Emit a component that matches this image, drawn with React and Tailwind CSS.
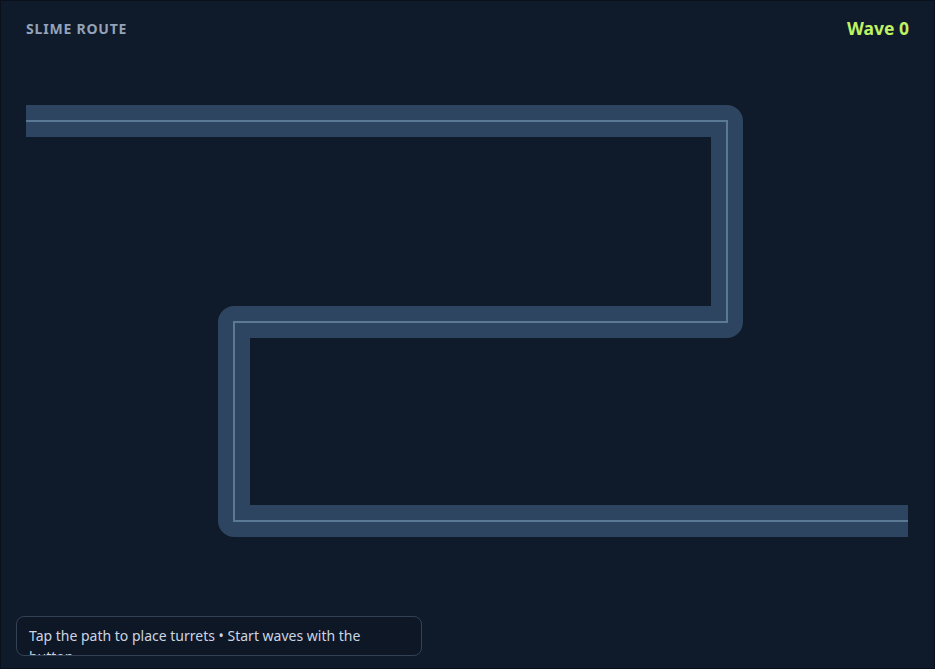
export default function App() {
  const route = "M26 121 H727 V322 H234 V521 H908";

  return (
    <div
      className="relative h-[669px] w-full overflow-hidden border border-[#0a111c] bg-[#0f1a2a]"
      style={{ fontFamily: '"Noto Sans", "Open Sans", sans-serif' }}
    >
      {/* Top bar */}
      <div className="flex h-[56px] items-center justify-between px-[25px] pb-[1px]">
        <span className="text-[14px] font-bold tracking-[0.8px] text-[#94a3b8]">SLIME ROUTE</span>
        <span className="text-[17.5px] font-bold text-[#bef264]">Wave 0</span>
      </div>

      {/* Board */}
      <svg className="block" width="933" height="520" viewBox="1 57 933 520">
        <path d={route} fill="none" stroke="#2d4560" strokeWidth="32" strokeLinejoin="round" />
        <path d={route} fill="none" stroke="#5b7894" strokeWidth="2" strokeLinejoin="miter" />
      </svg>

      {/* Hint */}
      <div className="absolute bottom-[12px] left-[15px] h-[40px] w-[406px] overflow-hidden rounded-lg border border-[#334155] bg-[#0e1726] pl-[12px] pr-[40px] pt-[8px]">
        <p className="text-[14px] leading-[21px] text-[#cbd5e1]">
          Tap the path to place turrets • Start waves with the button
        </p>
      </div>
    </div>
  );
}
